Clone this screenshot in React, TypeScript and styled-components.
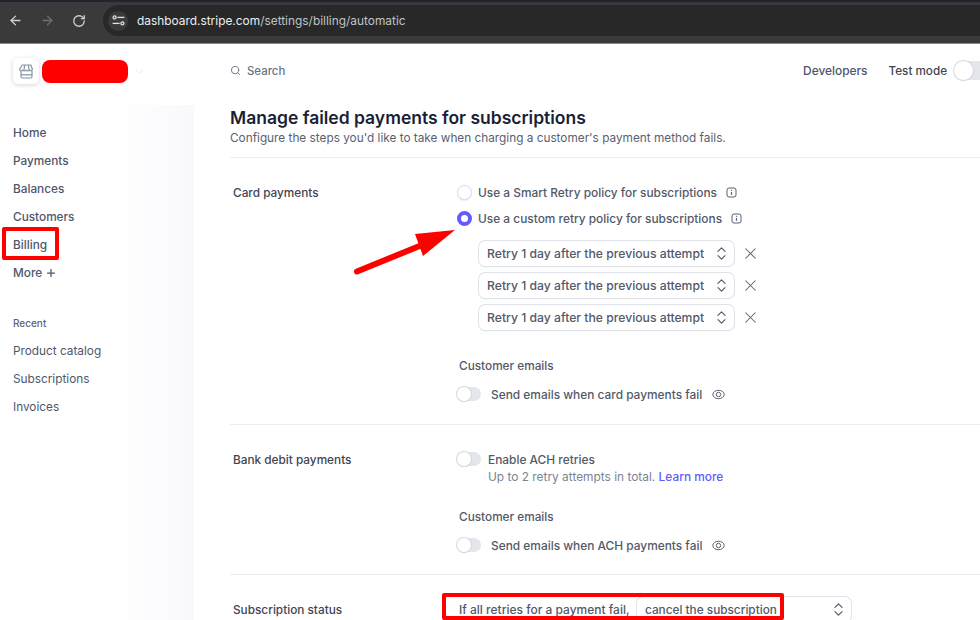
import styled, { createGlobalStyle } from "styled-components";
import { ArrowLeft, ArrowRight, ChevronDown, ChevronsUpDown, Plus, RotateCw, Search, X } from "lucide-react";

const Global = createGlobalStyle`
  html, body { margin: 0; padding: 0; background: #fff; }
  body { width: 980px; height: 620px; overflow: hidden; font-family: Inter, "Noto Sans", sans-serif; color: #414552; }
  * { box-sizing: border-box; }
`;
const Page = styled.div`
  position: relative;
  width: 980px;
  height: 620px;
  overflow: hidden;
`;
const BrowserBar = styled.div`
  height: 44px;
  background: #3a3a3a;
  border-top: 2px solid #20242f;
  border-bottom: 1px solid #8a8a8a;
  display: flex;
  align-items: center;
  padding: 0 0 4px 8px;
`;
const NavIcon = styled.span<{ $dim?: boolean }>`
  width: 32px;
  display: flex;
  color: ${(p) => (p.$dim ? "#6f6f6f" : "#cfcfcf")};
`;
const AddressPill = styled.div`
  margin-left: -1px;
  flex: 1;
  height: 31px;
  border-radius: 16px 0 0 16px;
  background: #282828;
  display: flex;
  align-items: center;
  gap: 9px;
  padding-left: 5px;
  font-size: 11.9px;
  color: #bfc3c8;
`;
const SiteBadge = styled.span`
  width: 20px;
  height: 20px;
  border-radius: 50%;
  background: #3b3b3b;
  display: flex;
  align-items: center;
  justify-content: center;
  color: #e4e4e4;
`;
const Host = styled.span`
  color: #eceff1;
`;
const Body = styled.div`
  display: flex;
  height: 576px;
`;
const Sidebar = styled.aside`
  width: 194px;
  flex: none;
  padding: 14px 0 0 13px;
  background: linear-gradient(180deg, #fff 61px, transparent 61px), linear-gradient(90deg, #fff 58%, #f9f9fd 100%);
`;
const Brand = styled.div`
  display: flex;
  align-items: center;
  gap: 3px;
  height: 26px;
  margin-bottom: 34px;
`;
const BrandIcon = styled.span`
  width: 26px;
  height: 26px;
  border-radius: 5px;
  background: #fff;
  box-shadow: 0 1px 4px rgba(60, 66, 87, 0.22);
  display: flex;
  align-items: center;
  justify-content: center;
  color: #8792a2;
`;
const BrandRedact = styled.span`
  width: 86px;
  height: 23px;
  margin-top: 1px;
  border-radius: 8px;
  background: #ff0000;
`;
const BrandChevron = styled.span`
  display: flex;
  margin-left: 2px;
  color: #eceef1;
`;
const NavList = styled.nav`
  display: flex;
  flex-direction: column;
`;
const NavItem = styled.div<{ $muted?: boolean }>`
  height: 28px;
  padding-top: 1px;
  display: flex;
  align-items: center;
  gap: 3px;
  font-size: 11.8px;
  font-weight: ${(p) => (p.$muted ? 400 : 500)};
  color: #4f566b;
`;
const RecentLabel = styled.div`
  margin: 28px 0 4px;
  height: 18px;
  display: flex;
  align-items: center;
  font-size: 10px;
  font-weight: 500;
  color: #5c6478;
`;
const Main = styled.main`
  flex: 1;
  min-width: 0;
  padding-left: 36px;
`;
const TopBar = styled.div`
  height: 53px;
  display: flex;
  align-items: center;
  font-size: 11.9px;
  font-weight: 500;
  color: #4f566b;
`;
const SearchBox = styled.div`
  display: flex;
  align-items: center;
  gap: 6px;
  color: #6a7383;
  flex: 1;
  font-size: 11.4px;
`;
const TopLink = styled.span`
  margin-right: 21px;
`;
const TestMode = styled.span`
  margin-right: 7px;
  font-size: 11.7px;
  color: #414552;
`;
const Header = styled.header`
  padding: 9px 0 10px;
  border-bottom: 1px solid #ebeef1;
`;
const Title = styled.h1`
  margin: 0;
  font-size: 17.5px;
  line-height: 24px;
  font-weight: 600;
  color: #1a1f36;
`;
const Subtitle = styled.p`
  margin: -1px 0 0;
  font-size: 11.8px;
  line-height: 18px;
  color: #596171;
`;
const Section = styled.section<{ $height: number }>`
  height: ${(p) => p.$height}px;
  display: flex;
  border-bottom: 1px solid #ebeef1;
  padding-top: 25px;
`;
const SectionLabel = styled.div`
  width: 229px;
  flex: none;
  padding: 1px 0 0 3px;
  font-size: 11.8px;
  line-height: 18px;
  font-weight: 500;
  color: #414552;
`;
const Column = styled.div`
  display: flex;
  flex-direction: column;
`;
const OptionRow = styled.label`
  height: 26px;
  margin-top: -4px;
  margin-bottom: 4px;
  display: flex;
  align-items: center;
  font-size: 11.9px;
  font-weight: 500;
  color: #545969;
`;
const Radio = styled.span<{ $on?: boolean }>`
  width: 15px;
  height: 15px;
  border-radius: 50%;
  margin-left: -2px;
  margin-right: 6px;
  background: #fff;
  border: ${(p) => (p.$on ? "4.5px solid #635bff" : "1px solid #d5dbe1")};
  box-shadow: ${(p) => (p.$on ? "none" : "0 1px 1px rgba(0,0,0,0.08)")};
`;
const InfoMark = styled.svg`
  margin-left: 9px;
  color: #596171;
`;
const RetryList = styled.div`
  display: flex;
  flex-direction: column;
  gap: 7px;
  margin: 6px 0 0 20px;
`;
const RetryRow = styled.div`
  display: flex;
  align-items: center;
  gap: 7px;
  color: #596171;
`;
const SelectBox = styled.div<{ $width: number; $size: number }>`
  width: ${(p) => p.$width}px;
  height: 25px;
  flex: none;
  display: flex;
  align-items: center;
  justify-content: space-between;
  padding: 0 4px 0 8px;
  background: #fff;
  border-radius: 6px;
  box-shadow: 0 0 0 1px #dfe2e8, 0 1px 1px rgba(0, 0, 0, 0.12);
  font-size: ${(p) => p.$size}px;
  font-weight: 500;
  color: #545969;
`;
const SubHeading = styled.div<{ $top: number }>`
  margin-top: ${(p) => p.$top}px;
  font-size: 11.8px;
  line-height: 18px;
  font-weight: 500;
  color: #545969;
`;
const ToggleRow = styled.div<{ $top?: number }>`
  margin-top: ${(p) => p.$top ?? 0}px;
  height: 18px;
  display: flex;
  align-items: center;
  font-size: 11.9px;
  font-weight: 500;
  color: #545969;
`;
const Toggle = styled.span<{ $gap?: number }>`
  position: relative;
  flex: none;
  width: 24px;
  height: 14px;
  border-radius: 7px;
  background: #e3e6eb;
  margin-left: -2px;
  margin-right: ${(p) => p.$gap ?? 10}px;
  &::after {
    content: "";
    position: absolute;
    left: 0;
    top: 0;
    width: 14px;
    height: 14px;
    border-radius: 50%;
    background: #fff;
    box-shadow: 0 0 0 1px #d5d9df, 0 1px 1px rgba(0, 0, 0, 0.15);
  }
`;
const TestToggle = styled(Toggle)`
  width: 36px;
  height: 19px;
  border-radius: 10px;
  margin: 0 -10px 0 0;
  &::after {
    width: 19px;
    height: 19px;
  }
`;
const EyeMark = styled.svg`
  margin-left: 10px;
  color: #596171;
`;
const HintText = styled.div`
  margin-left: 29px;
  font-size: 11.9px;
  line-height: 17px;
  color: #7b8494;
`;
const LearnMore = styled.a`
  color: #635bff;
  font-weight: 500;
`;
const StatusRow = styled.div`
  display: flex;
  align-items: flex-start;
  margin-top: -3px;
  font-size: 12px;
  font-weight: 500;
  color: #545969;
`;
const StatusLead = styled.span`
  height: 25px;
  display: flex;
  align-items: center;
  width: 178px;
`;
const Highlight = styled.div<{ $x: number; $y: number; $w: number; $h: number }>`
  position: absolute;
  left: ${(p) => p.$x}px;
  top: ${(p) => p.$y}px;
  width: ${(p) => p.$w}px;
  height: ${(p) => p.$h}px;
  border: 4px solid #ff0000;
  border-radius: 2px;
`;
const ArrowMark = styled.svg`
  position: absolute;
  left: 350px;
  top: 225px;
`;

const RETRIES = [1, 2, 3];

function InfoIcon() {
  return (
    <InfoMark width="11" height="11" viewBox="0 0 11 11" fill="none" stroke="currentColor">
      <rect x="1" y="1" width="9" height="9" rx="2" strokeWidth="1" />
      <path d="M5.5 5v2.8" strokeWidth="1.2" />
      <path d="M5.5 2.8v1.1" strokeWidth="1.2" />
    </InfoMark>
  );
}

function EyeIcon() {
  return (
    <EyeMark width="13" height="11" viewBox="0 0 13 11" fill="none" stroke="currentColor" strokeWidth="1">
      <ellipse cx="6.5" cy="5.5" rx="5.7" ry="4.2" />
      <circle cx="6.5" cy="5.5" r="2.2" />
    </EyeMark>
  );
}

export default function App() {
  return (
    <Page>
      <Global />
      <BrowserBar>
        <NavIcon><ArrowLeft size={15} strokeWidth={2.2} /></NavIcon>
        <NavIcon $dim><ArrowRight size={15} strokeWidth={2.2} /></NavIcon>
        <NavIcon><RotateCw size={14} strokeWidth={2.2} /></NavIcon>
        <AddressPill>
          <SiteBadge>
            <svg width="13" height="11" viewBox="0 0 13 11" fill="none" stroke="currentColor" strokeWidth="1.3">
              <circle cx="2.6" cy="2.4" r="1.5" />
              <path d="M5.4 2.4H12.4" />
              <path d="M0.6 8.4H7.6" />
              <circle cx="10.4" cy="8.4" r="1.5" />
            </svg>
          </SiteBadge>
          <span><Host>dashboard.stripe.com</Host>/settings/billing/automatic</span>
        </AddressPill>
      </BrowserBar>
      <Body>
        <Sidebar>
          <Brand>
            <BrandIcon>
              <svg width="15" height="15" viewBox="0 0 15 15" fill="none" stroke="currentColor" strokeWidth="1.2">
                <path d="M3.2 1h8.6l1.6 4.2a1.7 1.7 0 0 1-3 .9 2.2 2.2 0 0 1-3.4 0 2.2 2.2 0 0 1-3.4 0 1.7 1.7 0 0 1-3-.9z" />
                <path d="M5.6 1 5 6M9.4 1 10 6" />
                <path d="M2 7v5.6A1.4 1.4 0 0 0 3.4 14h8.2a1.4 1.4 0 0 0 1.4-1.4V7" />
                <path d="M2 10.8h11" />
              </svg>
            </BrandIcon>
            <BrandRedact />
            <BrandChevron><ChevronDown size={13} /></BrandChevron>
          </Brand>
          <NavList>
            <NavItem>Home</NavItem>
            <NavItem>Payments</NavItem>
            <NavItem>Balances</NavItem>
            <NavItem>Customers</NavItem>
            <NavItem>Billing</NavItem>
            <NavItem>More <Plus size={12} strokeWidth={2.5} /></NavItem>
          </NavList>
          <RecentLabel>Recent</RecentLabel>
          <NavList>
            <NavItem $muted>Product catalog</NavItem>
            <NavItem $muted>Subscriptions</NavItem>
            <NavItem $muted>Invoices</NavItem>
          </NavList>
        </Sidebar>
        <Main>
          <TopBar>
            <SearchBox><Search size={11} strokeWidth={2} /> Search</SearchBox>
            <TopLink>Developers</TopLink>
            <TestMode>Test mode</TestMode>
            <TestToggle />
          </TopBar>
          <Header>
            <Title>Manage failed payments for subscriptions</Title>
            <Subtitle>Configure the steps you'd like to take when charging a customer's payment method fails.</Subtitle>
          </Header>
          <Section $height={267}>
            <SectionLabel>Card payments</SectionLabel>
            <Column>
              <OptionRow>
                <Radio />Use a Smart Retry policy for subscriptions
                <InfoIcon />
              </OptionRow>
              <OptionRow>
                <Radio $on />Use a custom retry policy for subscriptions
                <InfoIcon />
              </OptionRow>
              <RetryList>
                {RETRIES.map((id) => (
                  <RetryRow key={id}>
                    <SelectBox $width={255} $size={12.2}>
                      Retry 1 day after the previous attempt
                      <ChevronsUpDown size={17} strokeWidth={1.6} />
                    </SelectBox>
                    <X size={19} strokeWidth={1.3} />
                  </RetryRow>
                ))}
              </RetryList>
              <SubHeading $top={27}>Customer emails</SubHeading>
              <ToggleRow $top={10}>
                <Toggle />Send emails when card payments fail
                <EyeIcon />
              </ToggleRow>
            </Column>
          </Section>
          <Section $height={150}>
            <SectionLabel>Bank debit payments</SectionLabel>
            <Column>
              <ToggleRow><Toggle $gap={7} />Enable ACH retries</ToggleRow>
              <HintText>Up to 2 retry attempts in total. <LearnMore>Learn more</LearnMore></HintText>
              <SubHeading $top={23}>Customer emails</SubHeading>
              <ToggleRow $top={10}>
                <Toggle />Send emails when ACH payments fail
                <EyeIcon />
              </ToggleRow>
            </Column>
          </Section>
          <Section $height={60}>
            <SectionLabel>Subscription status</SectionLabel>
            <StatusRow>
              <StatusLead>If all retries for a payment fail,</StatusLead>
              <SelectBox $width={214} $size={11.8}>
                cancel the subscription
                <ChevronsUpDown size={17} strokeWidth={1.6} />
              </SelectBox>
            </StatusRow>
          </Section>
        </Main>
      </Body>
      <Highlight $x={2} $y={227} $w={57} $h={33} />
      <Highlight $x={442} $y={593} $w={342} $h={27} />
      <ArrowMark width="110" height="52" viewBox="0 0 110 52">
        <path d="M7 46.5 L72 20" stroke="#ff0000" strokeWidth="6" strokeLinecap="round" />
        <path d="M65 9 L105 5 L73 31 Z" fill="#ff0000" />
      </ArrowMark>
    </Page>
  );
}
